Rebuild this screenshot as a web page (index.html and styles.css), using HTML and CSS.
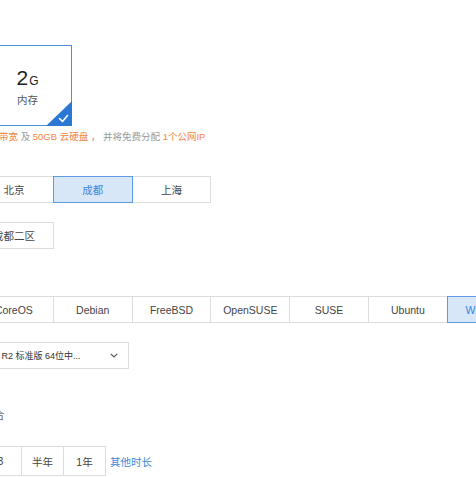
FILE: index.html
```html
<!DOCTYPE html>
<html lang="zh-CN">
<head>
<meta charset="utf-8">
<title>配置</title>
<link rel="stylesheet" href="styles.css">
</head>
<body>
<div class="page">
  <div class="spec-row">
    <div class="spec-card is-selected">
      <div class="spec-val"><span class="num">2</span><span class="unit">G</span></div>
      <div class="spec-name">内存</div>
      <span class="corner">
        <svg width="26" height="25" viewBox="0 0 26 25"><path d="M26 0 L26 25 L0 25 Z" fill="#2b78d4"/><path d="M13.5 17.5 L16.5 20.5 L21.5 14.5" fill="none" stroke="#fff" stroke-width="1.6" stroke-linecap="round" stroke-linejoin="round"/></svg>
      </span>
    </div>
  </div>
  <p class="desc"><span class="hl">带宽</span> 及 <span class="hl">50GB 云硬盘</span> ， 并将免费分配 <span class="hl">1个公网IP</span></p>

  <div class="btn-group row-region">
    <span class="btn">北京</span>
    <span class="btn is-active">成都</span>
    <span class="btn">上海</span>
  </div>

  <div class="btn-group row-zone">
    <span class="btn">成都二区</span>
  </div>

  <div class="btn-group row-os">
    <span class="btn">CoreOS</span>
    <span class="btn">Debian</span>
    <span class="btn">FreeBSD</span>
    <span class="btn">OpenSUSE</span>
    <span class="btn">SUSE</span>
    <span class="btn">Ubuntu</span>
    <span class="btn is-active">Windows</span>
  </div>

  <div class="select">
    <span class="select-text">Windows Server 2012 R2 标准版 64位中...</span>
    <svg class="chev" width="8" height="5" viewBox="0 0 8 5"><path d="M0.8 0.8 L4 4 L7.2 0.8" fill="none" stroke="#555" stroke-width="1.2"/></svg>
  </div>

  <div class="label-line">合</div>

  <div class="duration">
    <div class="btn-group small">
      <span class="btn">3</span>
      <span class="btn">半年</span>
      <span class="btn">1年</span>
    </div>
    <a class="more" href="#">其他时长</a>
  </div>
</div>
</body>
</html>
```

FILE: styles.css
```css
html, body {
  margin: 0;
  padding: 0;
  background: #fff;
  overflow: hidden;
}
body {
  font-family: "Liberation Sans", "Noto Sans CJK SC", sans-serif;
  color: #333;
  width: 476px;
  height: 477px;
}
.page {
  padding-top: 45px;
  margin-left: -26px;
}
.spec-row {
  display: flex;
  padding-left: 9px;
}
.spec-card {
  position: relative;
  box-sizing: border-box;
  width: 89px;
  height: 81px;
  border: 1px solid #4a8fdb;
  display: flex;
  flex-direction: column;
  align-items: center;
  justify-content: center;
  padding-top: 3px;
  gap: 1px;
}
.spec-val {
  line-height: 22px;
  color: #222;
}
.spec-val .num {
  font-size: 21px;
}
.spec-val .unit {
  font-size: 12px;
  margin-left: 1px;
}
.spec-name {
  font-size: 10.5px;
  line-height: 14px;
  color: #555;
}
.corner {
  position: absolute;
  right: -1px;
  bottom: -1px;
  width: 26px;
  height: 25px;
  display: block;
}
.corner svg {
  display: block;
}
.desc {
  margin: 4px 0 0 25px;
  font-size: 9.5px;
  line-height: 14px;
  color: #999;
  white-space: nowrap;
}
.desc .hl {
  color: #f4863a;
}
.btn-group {
  display: flex;
}
.btn {
  box-sizing: border-box;
  width: 79.8px;
  height: 27px;
  border: 1px solid #dcdcdc;
  margin-left: -1px;
  display: flex;
  align-items: center;
  justify-content: center;
  font-size: 10.5px;
  color: #444;
  background: #fff;
  white-space: nowrap;
  flex: none;
}
.btn-group .btn:first-child {
  margin-left: 0;
}
.btn.is-active {
  position: relative;
  z-index: 1;
  background: #d8e7f8;
  border-color: #5b9be0;
  color: #3786dc;
}
.row-region {
  margin-top: 32px;
}
.row-zone {
  margin-top: 19px;
}
.row-os {
  margin-top: 47px;
}
.select {
  box-sizing: border-box;
  margin-top: 19px;
  margin-left: -72px;
  width: 227px;
  height: 27px;
  border: 1px solid #dcdcdc;
  display: flex;
  align-items: center;
  padding: 0 10px 0 8px;
  font-size: 9px;
  color: #333;
}
.select-text {
  flex: 1;
  white-space: nowrap;
  overflow: hidden;
}
.chev {
  display: block;
  flex: none;
}
.label-line {
  margin-top: 39px;
  margin-left: 20px;
  font-size: 10.5px;
  line-height: 14px;
  color: #666;
}
.duration {
  margin-top: 24px;
  display: flex;
  align-items: center;
  margin-left: 5px;
}
.btn-group.small .btn {
  width: 43px;
  height: 30px;
}
.more {
  margin-left: 4px;
  font-size: 10.5px;
  color: #3a8ad8;
  text-decoration: none;
}
```
